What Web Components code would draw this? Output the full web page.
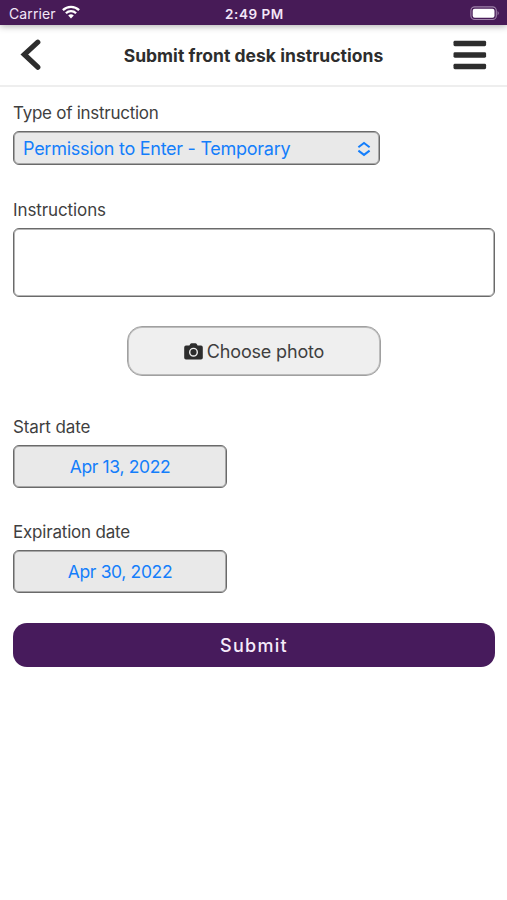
<!DOCTYPE html>
<html lang="en">
<head>
<meta charset="utf-8">
<title>Submit front desk instructions</title>
<style>
body { margin: 0; background: #fff; color: #3f3f3f; font-family: Inter, "Liberation Sans", sans-serif; min-height: 100vh; }
</style>
</head>
<body>
<desk-screen></desk-screen>
<script>
const define = (name, html) => customElements.define(name, class extends HTMLElement {
  constructor() {
    super();
    this.attachShadow({ mode: 'open' }).innerHTML = html;
  }
});

define('status-bar', `
<style>
:host { display: grid; grid-template-columns: 1fr auto 1fr; align-items: center; height: 25px; box-sizing: border-box; padding: 2px 7px 0 9px; background: #471b57; color: #f3e6f7; font-size: 14px; line-height: 20px; box-shadow: 0 1px 7px rgba(0,0,0,.34); position: relative; }
.left { display: flex; align-items: center; gap: 6px; }
.carrier { font-size: 14px; letter-spacing: .12px; }
.time { font-weight: 600; font-size: 13.5px; letter-spacing: .55px; }
svg { display: block; }
.wifi { margin-top: -3px; }
.battery { justify-self: end; }
</style>
<div class="left"><span class="carrier">Carrier</span>
<svg class="wifi" width="18" height="14" viewBox="0 0 18 14" fill="none" stroke="#fff" stroke-width="2.3"><path d="M.9 5.1a11.6 11.6 0 0 1 16.2 0M3.9 8.3a7.3 7.3 0 0 1 10.2 0"/><path d="M6.2 10.6a4 4 0 0 1 5.600 0L9 13.500z" fill="#fff" stroke="none"/></svg></div>
<span class="time">2:49 PM</span>
<svg class="battery" width="30" height="15" viewBox="0 0 30 15"><rect x=".9" y=".9" width="25.4" height="12.6" rx="3.8" fill="none" stroke="#a083aa" stroke-width="1.1"/><rect x="2.7" y="2.7" width="21.800" height="9" rx="2" fill="#fff"/><path d="M27.600 5q2.300 2.200 0 4.400z" fill="#a083aa"/></svg>
`);

define('nav-header', `
<style>
:host { display: grid; grid-template-columns: 34px 1fr 34px; align-items: center; height: 62px; box-sizing: border-box; padding: 0 20px; border-bottom: 2px solid #eee; color: #2d2d2d; }
h1 { margin: 0; padding-top: 1px; text-align: center; font-size: 17.5px; line-height: 24px; font-weight: 700; letter-spacing: .03px; white-space: nowrap; }
svg { display: block; }
</style>
<svg width="22" height="32" viewBox="0 0 22 32" fill="none" stroke="#2d2d2d" stroke-width="5.200" stroke-linecap="round"><path d="M17.800 3.200 4.300 15.500 17.800 28.200"/></svg>
<h1><slot></slot></h1>
<svg width="34" height="30" viewBox="0 0 34 30" fill="#2d2d2d"><rect x=".5" y=".8" width="32.600" height="5.400" rx="1.400"/><rect x=".5" y="12.300" width="32.600" height="5.400" rx="1.400"/><rect x=".5" y="23.800" width="32.600" height="5.400" rx="1.400"/></svg>
`);

define('form-field', `
<style>
:host { display: block; }
.label { font-size: 17px; line-height: 20px; letter-spacing: var(--label-spacing, -.1px); white-space: nowrap; margin-bottom: 8px; }
</style>
<div class="label"><slot name="label"></slot></div><slot></slot>
`);

define('select-box', `
<style>
:host { display: flex; align-items: center; justify-content: space-between; width: 367px; height: 34px; box-sizing: border-box; padding: 1px 8px 0 9px; border: 1px solid #6a6a6a; box-shadow: inset 0 0 0 1px #a8a8a8; border-radius: 6px; background: #e9e9e9; color: #147efb; font-size: 18px; line-height: 22px; letter-spacing: -.27px; white-space: nowrap; }
span { padding-top: 1px; }
svg { display: block; }
</style>
<span><slot></slot></span>
<svg width="14" height="16" viewBox="0 0 14 16" fill="none" stroke="#147efb" stroke-width="2"><path d="M1.4 6.2 7 1.9l5.600 4.300M1.400 9.600 7 13.900l5.600-4.300"/></svg>
`);

define('text-area', `
<style>
:host { display: block; height: 69px; box-sizing: border-box; border: 1px solid #6a6a6a; box-shadow: inset 0 0 0 1px #b5b5b5; border-radius: 6px; background: #fff; }
</style>`);

define('photo-button', `
<style>
:host { display: flex; align-items: center; justify-content: center; gap: 4px; width: 254px; height: 50px; box-sizing: border-box; padding-top: 1px; border: 1px solid #a0a0a0; box-shadow: inset 0 0 0 1px #bcbcbc; border-radius: 15px; background: #efefef; font-size: 18px; line-height: 22px; letter-spacing: -.17px; white-space: nowrap; }
svg { display: block; margin-top: -1px; }
</style>
<svg width="19" height="17" viewBox="0 0 19 17"><path d="M2 2.600h3.400L6.300.900Q6.700.200 7.500.200h4q.800 0 1.200.700l.900 1.700H17q1.800 0 1.800 1.800v10.300q0 1.800-1.800 1.800H2Q.200 16.500.200 14.700V4.400Q.200 2.600 2 2.600z" fill="#2d2d2d"/><circle cx="9.500" cy="9.200" r="3.800" fill="none" stroke="#efefef" stroke-width="1.400"/></svg>
<span><slot></slot></span>
`);

define('date-button', `
<style>
:host { display: flex; align-items: center; justify-content: center; width: 214px; height: 43px; box-sizing: border-box; border: 1px solid #6a6a6a; box-shadow: inset 0 0 0 1px #a8a8a8; border-radius: 6px; background: #e9e9e9; color: #147efb; font-size: 17.5px; line-height: 22px; letter-spacing: -.35px; white-space: nowrap; }
</style>
<span><slot></slot></span>
`);

define('submit-button', `
<style>
:host { display: flex; align-items: center; justify-content: center; height: 44px; box-sizing: border-box; padding-top: 1px; border-radius: 14px; background: #471b5c; color: #f6ebfa; font-size: 18px; font-weight: 500; line-height: 22px; letter-spacing: 1.3px; }
</style>
<span><slot></slot></span>
`);

define('desk-screen', `
<style>
:host { display: block; width: 507px; }
main { display: flex; flex-direction: column; padding: 16px 12px 0 13px; }
photo-button { align-self: center; }
</style>
<status-bar></status-bar>
<nav-header>Submit front desk instructions</nav-header>
<main>
<form-field style="--label-spacing:-.27px"><span slot="label">Type of instruction</span><select-box>Permission to Enter - Temporary</select-box></form-field>
<form-field style="margin-top:35px"><span slot="label">Instructions</span><text-area></text-area></form-field>
<photo-button style="margin-top:29px">Choose photo</photo-button>
<form-field style="margin-top:41px"><span slot="label">Start date</span><date-button>Apr 13, 2022</date-button></form-field>
<form-field style="margin-top:34px;--label-spacing:-.2px"><span slot="label">Expiration date</span><date-button>Apr 30, 2022</date-button></form-field>
<submit-button style="margin-top:30px">Submit</submit-button>
</main>
`);
</script>
</body>
</html>
